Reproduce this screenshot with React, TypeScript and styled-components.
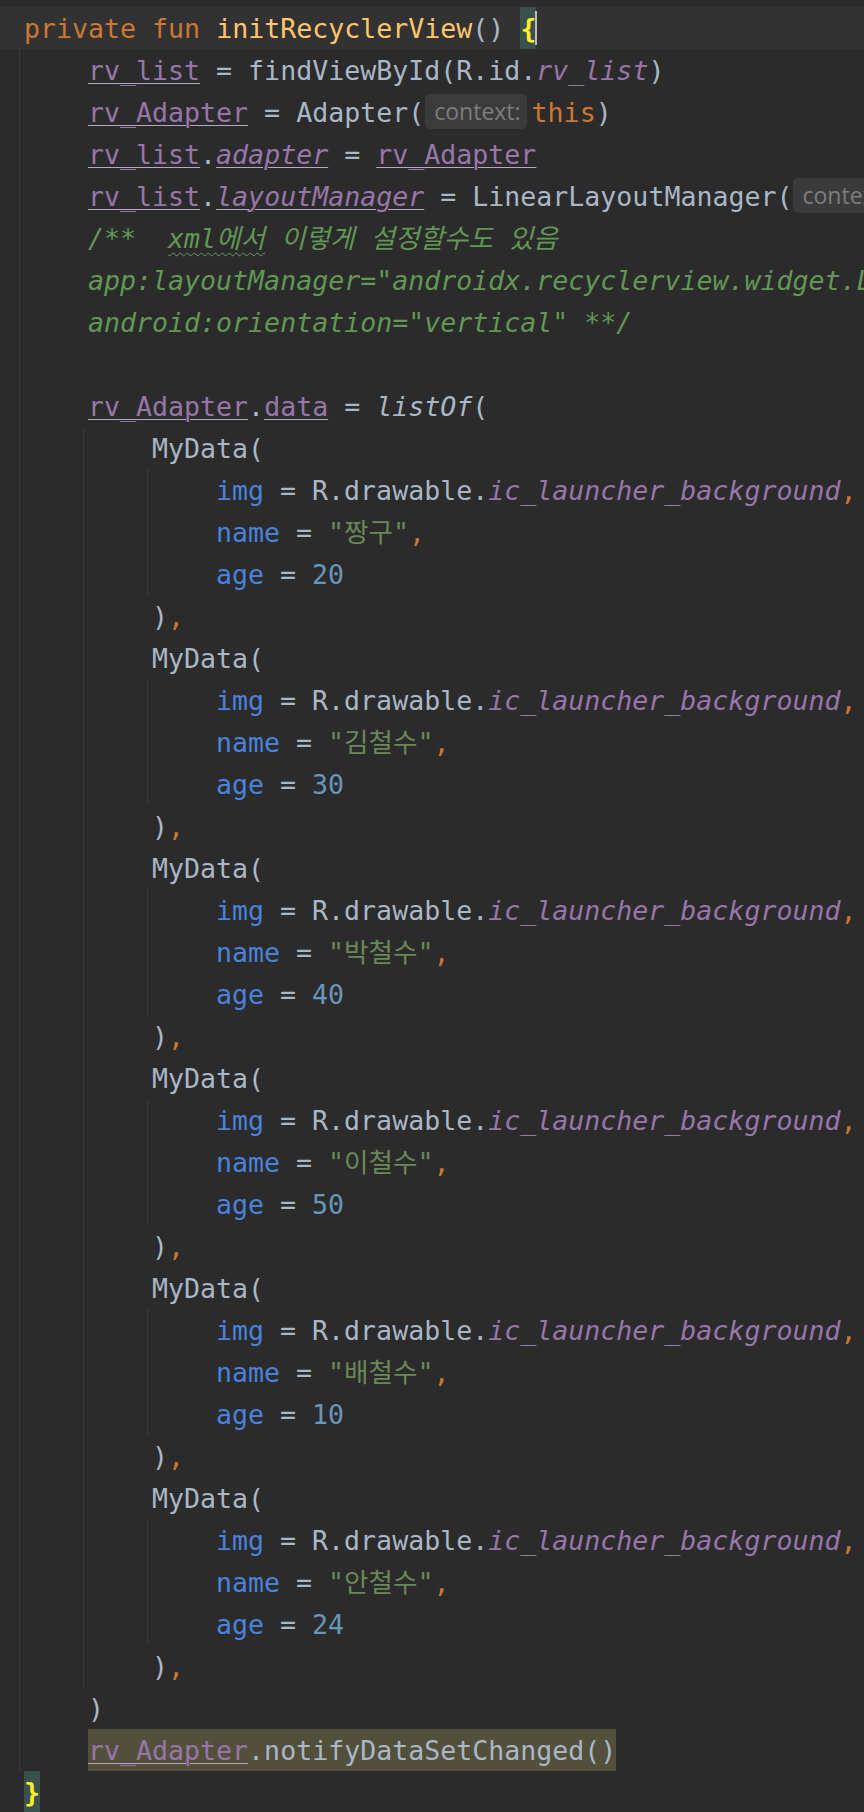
import React from "react";
import styled, { createGlobalStyle, css } from "styled-components";

const CHAR = 16;
const LEFT = 24;
const colX = (c: number) => LEFT + c * CHAR;
const guideX = (c: number) => colX(c) - 5;

const GlobalStyle = createGlobalStyle`
  html, body { margin: 0; padding: 0; background: #2b2b2b; overflow: hidden; }
  body { width: 864px; height: 1812px; }
`;

const Editor = styled.div`
  width: 864px;
  height: 1812px;
  overflow: hidden;
  box-sizing: border-box;
  padding-top: 7px;
  background: #2b2b2b;
  color: #a9b7c6;
  font-family: "DejaVu Sans Mono", "Noto Sans CJK KR", monospace;
  font-size: 26.6px;
  white-space: pre;
`;

const Line = styled.div<{ $pad: number; $current?: boolean }>`
  height: 42px;
  box-sizing: border-box;
  padding-top: 2px;
  line-height: 40px;
  padding-left: ${(p) => p.$pad}px;
  background: ${(p) => (p.$current ? "#323232" : "transparent")};
`;

const Guide = styled.div<{ $offset: number }>`
  margin-left: ${(p) => p.$offset}px;
  border-left: 1px solid #393939;
`;

const Kw = styled.span`
  color: #cc7832;
`;
const FnName = styled.span`
  color: #ffc66d;
`;
const Prop = styled.span<{ $italic?: boolean; $under?: boolean }>`
  color: #9876aa;
  font-style: ${(p) => (p.$italic ? "italic" : "normal")};
  ${(p) =>
    p.$under &&
    css`
      text-decoration: underline;
      text-decoration-color: #b9a6c6;
      text-decoration-thickness: 1px;
      text-underline-offset: 3px;
    `}
`;
const TopLevelFn = styled.span`
  font-style: italic;
`;
const Named = styled.span`
  color: #4a82dc;
`;
const Str = styled.span`
  color: #6a8759;
`;
const Num = styled.span`
  color: #6897bb;
`;
const DocComment = styled.span`
  color: #629755;
  font-style: italic;
`;
const Typo = styled.span`
  text-decoration: underline wavy #659c6b;
  text-decoration-thickness: 1px;
  text-underline-offset: 4px;
`;
const Hint = styled.span`
  display: inline-block;
  vertical-align: top;
  margin: 1px 5px 0 1px;
  height: 35px;
  line-height: 35px;
  padding: 0 6px 0 9px;
  border-radius: 5px;
  background: #3b3b3b;
  color: #7d7d7d;
  font-family: "Open Sans", sans-serif;
  font-size: 23px;
  font-style: normal;
`;
const Marked = styled.span<{ $tone: "brace" | "usage" }>`
  display: inline-block;
  vertical-align: top;
  box-sizing: border-box;
  height: 42px;
  margin-top: -2px;
  padding-top: 2px;
  line-height: 40px;
  background: ${(p) => (p.$tone === "brace" ? "#3b514d" : "#52503a")};
  ${(p) =>
    p.$tone === "brace" &&
    css`
      color: #ffef28;
      font-weight: bold;
    `}
`;
const Caret = styled.span`
  display: inline-block;
  vertical-align: top;
  width: 2px;
  height: 34px;
  margin-top: 2px;
  margin-left: -1px;
  background: #bbbbbb;
`;

type Item =
  | { kind: "line"; col: number; current?: boolean; content: React.ReactNode }
  | { kind: "guide"; col: number; children: Item[] };

const line = (col: number, content: React.ReactNode, current?: boolean): Item => ({
  kind: "line",
  col,
  content,
  current,
});
const guide = (col: number, children: Item[]): Item => ({ kind: "guide", col, children });

const people: [string, number][] = [
  ["짱구", 20],
  ["김철수", 30],
  ["박철수", 40],
  ["이철수", 50],
  ["배철수", 10],
  ["안철수", 24],
];

const myData = (name: string, age: number): Item[] => [
  line(8, <>MyData(</>),
  guide(8, [
    line(
      12,
      <>
        <Named>img</Named> = R.drawable.<Prop $italic>ic_launcher_background</Prop>
        <Kw>,</Kw>
      </>
    ),
    line(
      12,
      <>
        <Named>name</Named> = <Str>"{name}"</Str>
        <Kw>,</Kw>
      </>
    ),
    line(
      12,
      <>
        <Named>age</Named> = <Num>{age}</Num>
      </>
    ),
  ]),
  line(
    8,
    <>
      )<Kw>,</Kw>
    </>
  ),
];

const items: Item[] = [
  line(
    0,
    <>
      <Kw>private fun </Kw>
      <FnName>initRecyclerView</FnName>() <Marked $tone="brace">{"{"}</Marked>
      <Caret />
    </>,
    true
  ),
  guide(0, [
    line(
      4,
      <>
        <Prop $under>rv_list</Prop> = findViewById(R.id.<Prop $italic>rv_list</Prop>)
      </>
    ),
    line(
      4,
      <>
        <Prop $under>rv_Adapter</Prop> = Adapter(<Hint>context:</Hint>
        <Kw>this</Kw>)
      </>
    ),
    line(
      4,
      <>
        <Prop $under>rv_list</Prop>.<Prop $italic $under>adapter</Prop> ={" "}
        <Prop $under>rv_Adapter</Prop>
      </>
    ),
    line(
      4,
      <>
        <Prop $under>rv_list</Prop>.<Prop $italic $under>layoutManager</Prop> = LinearLayoutManager(
        <Hint>context:</Hint>
        <Kw>this</Kw>)
      </>
    ),
    line(
      4,
      <DocComment>
        {"/**  "}
        <Typo>xml에서</Typo> 이렇게 설정할수도 있음
      </DocComment>
    ),
    line(
      4,
      <DocComment>app:layoutManager="androidx.recyclerview.widget.LinearLayoutManager"</DocComment>
    ),
    line(4, <DocComment>android:orientation="vertical" **/</DocComment>),
    line(4, ""),
    line(
      4,
      <>
        <Prop $under>rv_Adapter</Prop>.<Prop $under>data</Prop> = <TopLevelFn>listOf</TopLevelFn>(
      </>
    ),
    guide(4, people.flatMap(([n, a]) => myData(n, a))),
    line(4, <>)</>),
    line(
      4,
      <Marked $tone="usage">
        <Prop $under>rv_Adapter</Prop>.notifyDataSetChanged()
      </Marked>
    ),
  ]),
  line(0, <Marked $tone="brace">{"}"}</Marked>),
];

function renderItems(list: Item[], baseX: number): React.ReactNode {
  return list.map((it, i) =>
    it.kind === "line" ? (
      <Line key={i} $pad={colX(it.col) - baseX} $current={it.current}>
        {it.content}
      </Line>
    ) : (
      <Guide key={i} $offset={guideX(it.col) - baseX}>
        {renderItems(it.children, guideX(it.col) + 1)}
      </Guide>
    )
  );
}

export default function App() {
  return (
    <>
      <GlobalStyle />
      <Editor>{renderItems(items, 0)}</Editor>
    </>
  );
}
